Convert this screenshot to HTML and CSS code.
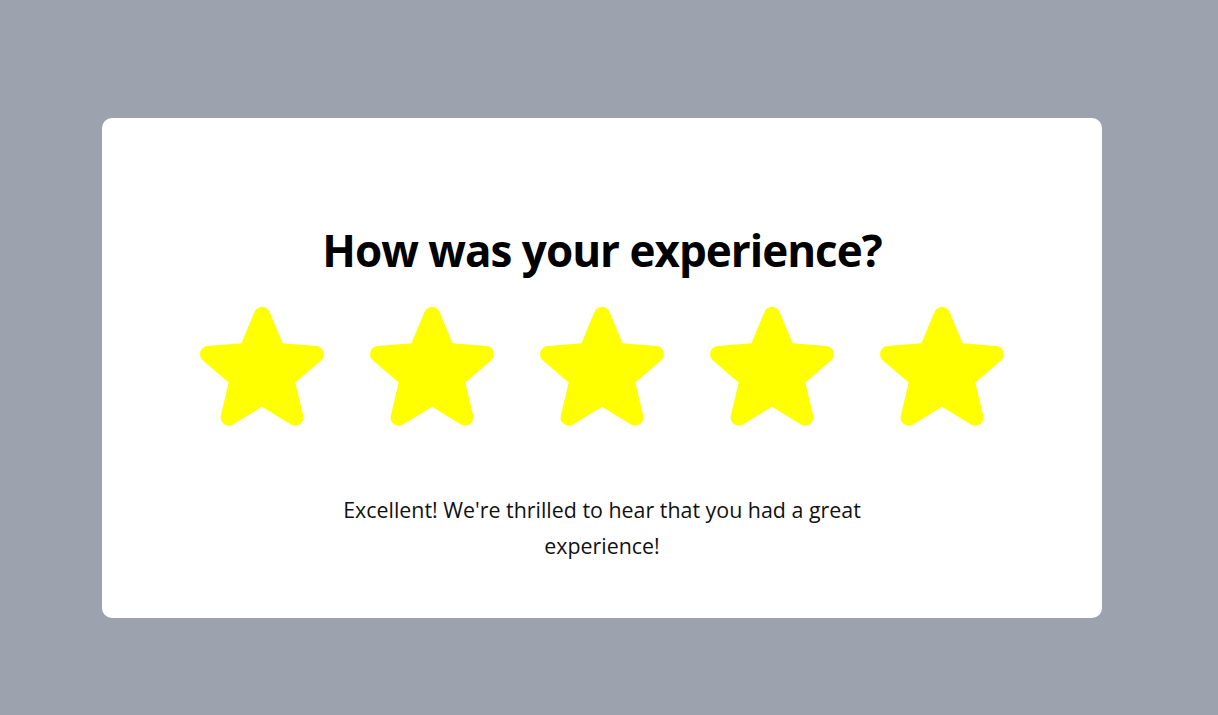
FILE: index.html
```html
<!DOCTYPE html>
<html lang="en">
<head>
<meta charset="utf-8">
<title>Rating</title>
<link rel="stylesheet" href="styles.css">
</head>
<body>
<main class="page">
  <section class="card">
    <h1 class="title">How was your experience?</h1>
    <div class="stars">
      <svg class="star" viewBox="0 0 24 24"><path d="M10.788 3.21c.448-1.077 1.976-1.077 2.424 0l2.082 5.006 5.404.434c1.164.093 1.636 1.545.749 2.305l-4.117 3.527 1.257 5.273c.271 1.136-.964 2.033-1.96 1.425L12 18.354 7.373 21.18c-.996.608-2.231-.29-1.96-1.425l1.257-5.273-4.117-3.527c-.887-.76-.415-2.212.749-2.305l5.404-.434 2.082-5.005Z"/></svg>
      <svg class="star" viewBox="0 0 24 24"><path d="M10.788 3.21c.448-1.077 1.976-1.077 2.424 0l2.082 5.006 5.404.434c1.164.093 1.636 1.545.749 2.305l-4.117 3.527 1.257 5.273c.271 1.136-.964 2.033-1.96 1.425L12 18.354 7.373 21.18c-.996.608-2.231-.29-1.96-1.425l1.257-5.273-4.117-3.527c-.887-.76-.415-2.212.749-2.305l5.404-.434 2.082-5.005Z"/></svg>
      <svg class="star" viewBox="0 0 24 24"><path d="M10.788 3.21c.448-1.077 1.976-1.077 2.424 0l2.082 5.006 5.404.434c1.164.093 1.636 1.545.749 2.305l-4.117 3.527 1.257 5.273c.271 1.136-.964 2.033-1.96 1.425L12 18.354 7.373 21.18c-.996.608-2.231-.29-1.96-1.425l1.257-5.273-4.117-3.527c-.887-.76-.415-2.212.749-2.305l5.404-.434 2.082-5.005Z"/></svg>
      <svg class="star" viewBox="0 0 24 24"><path d="M10.788 3.21c.448-1.077 1.976-1.077 2.424 0l2.082 5.006 5.404.434c1.164.093 1.636 1.545.749 2.305l-4.117 3.527 1.257 5.273c.271 1.136-.964 2.033-1.96 1.425L12 18.354 7.373 21.18c-.996.608-2.231-.29-1.96-1.425l1.257-5.273-4.117-3.527c-.887-.76-.415-2.212.749-2.305l5.404-.434 2.082-5.005Z"/></svg>
      <svg class="star" viewBox="0 0 24 24"><path d="M10.788 3.21c.448-1.077 1.976-1.077 2.424 0l2.082 5.006 5.404.434c1.164.093 1.636 1.545.749 2.305l-4.117 3.527 1.257 5.273c.271 1.136-.964 2.033-1.96 1.425L12 18.354 7.373 21.18c-.996.608-2.231-.29-1.96-1.425l1.257-5.273-4.117-3.527c-.887-.76-.415-2.212.749-2.305l5.404-.434 2.082-5.005Z"/></svg>
    </div>
    <p class="message">Excellent! We're thrilled to hear that you had a great experience!</p>
  </section>
</main>
</body>
</html>
```

FILE: styles.css
```css
html, body {
  margin: 0;
  padding: 0;
}
body {
  background: #9ca3af;
  font-family: "Open Sans", "Noto Sans", sans-serif;
  color: #000;
}
.page {
  height: 715px;
  box-sizing: border-box;
  padding: 118px 0 0 102px;
}
.card {
  width: 1000px;
  height: 500px;
  background: #fff;
  border-radius: 10px;
  display: flex;
  flex-direction: column;
  align-items: center;
  box-sizing: border-box;
  padding-top: 103px;
}
.title {
  margin: 0;
  font-size: 44px;
  line-height: 58px;
  font-weight: 700;
  letter-spacing: -1px;
}
.stars {
  display: flex;
  gap: 20px;
  margin-top: 13px;
}
.star {
  width: 150px;
  height: 150px;
  fill: #ffff00;
  display: block;
}
.message {
  margin: 50px 0 0;
  width: 560px;
  text-align: center;
  font-size: 21.4px;
  line-height: 36px;
  color: #111;
}
```
